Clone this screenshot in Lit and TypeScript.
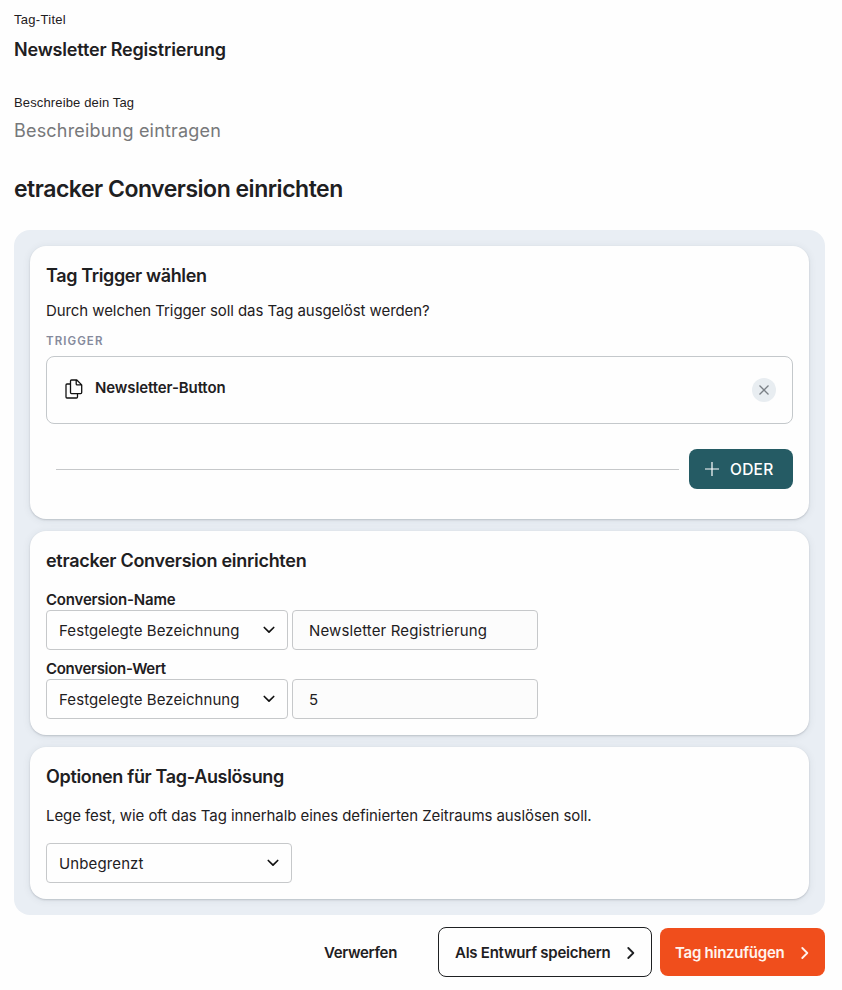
import { LitElement, html, css, svg } from "lit";
import { customElement } from "lit/decorators.js";

const chevronDown = html`<svg class="chev" width="12" height="8" viewBox="0 0 12 8" fill="none" stroke="currentColor" stroke-width="1.7" stroke-linecap="round" stroke-linejoin="round">${svg`<path d="M1.3 1.5 6 6.2 10.7 1.5"/>`}</svg>`;
const chevronRight = html`<svg width="8" height="12" viewBox="0 0 8 12" fill="none" stroke="currentColor" stroke-width="1.8" stroke-linecap="round" stroke-linejoin="round">${svg`<path d="M1.3 1 6.3 6 1.3 11"/>`}</svg>`;

@customElement("app-root")
export class AppRoot extends LitElement {
  static styles = css`
    :host {
      display: block;
      box-sizing: border-box;
      height: 990px;
      padding: 12px 17px 0 14px;
      background: #fefefe;
      color: #1e2022;
      font-family: Inter, "Liberation Sans", Arial, sans-serif;
      font-size: 15px;
      line-height: 20px;
      overflow: hidden;
      white-space: nowrap;
    }
    *, *::before { box-sizing: border-box; }
    h2, h3, p { margin: 0; }
    button { border: 0; padding: 0; margin: 0; background: none; color: inherit; white-space: nowrap; }
    svg { display: block; flex: none; }
    .caption { font-family: "Liberation Sans", Arial, sans-serif; font-size: 13px; line-height: 16px; letter-spacing: 0.29px; }
    .caption.desc { margin-top: 33px; letter-spacing: 0.14px; }
    .strong, h2, h3 { font-weight: 600; }
    h3, .title { font-size: 18px; line-height: 24px; letter-spacing: -0.28px; }
    .title { margin-top: 10px; letter-spacing: -0.18px; }
    .placeholder { margin-top: 8px; font-size: 18px; line-height: 24px; letter-spacing: 0.19px; color: #77787a; }
    h2 { margin-top: 30px; font-size: 23px; line-height: 32px; letter-spacing: -0.49px; }
    .panel { display: flex; flex-direction: column; gap: 12px; margin-top: 25px; padding: 16px; border-radius: 16px; background: #e9eef4; }
    .card { padding: 18px 16px 16px; border-radius: 16px; background: #fefefe; box-shadow: 0 1px 2px rgba(40, 50, 60, 0.2), 0 1px 8px rgba(40, 50, 60, 0.08); }
    .card.triggers { padding-bottom: 30px; }
    .triggers h3 { letter-spacing: -0.37px; }
    .options h3 { letter-spacing: -0.34px; }
    .question { margin-top: 13px; letter-spacing: -0.08px; }
    .overline { margin-top: 12px; font-weight: 600; font-size: 11.5px; line-height: 16px; letter-spacing: 1.07px; color: #858a9c; }
    .trigger { display: flex; align-items: center; height: 68px; margin-top: 7px; padding: 0 16px 0 18px; border: 1px solid #c4c8cb; border-radius: 8px; }
    .trigger .strong { flex: 1; margin-left: 12px; padding-bottom: 5px; letter-spacing: -0.1px; }
    .copy { margin-bottom: 2px; color: #111; }
    .remove { display: grid; place-items: center; width: 24px; height: 24px; border-radius: 50%; background: #e8edf1; color: #7a8086; }
    .or { display: flex; align-items: center; margin-top: 25px; padding-left: 10px; }
    .rule { flex: 1; height: 1px; margin-right: 10px; background: #c6c8ca; }
    .or-button { display: flex; align-items: center; gap: 11px; width: 104px; height: 40px; padding: 1px 0 0 16px; border-radius: 8px; background: #255b64; color: #fff; font: 500 15.5px/20px Inter, sans-serif; letter-spacing: 0.25px; }
    .or-button svg { margin-bottom: 1px; }
    .field-label { margin-top: 17px; letter-spacing: -0.19px; }
    .field-label.value { margin-top: 9px; letter-spacing: -0.3px; }
    .fields { display: flex; gap: 4px; }
    .select, .input { display: flex; align-items: center; height: 40px; border: 1px solid #c6c8ca; border-radius: 4px; padding-top: 1px; }
    .select { width: 242px; justify-content: space-between; padding-left: 12px; padding-right: 12px; letter-spacing: 0.07px; }
    .input { width: 246px; padding-left: 16px; background: #fcfcfc; letter-spacing: 0.13px; }
    .chev { margin-bottom: 1px; color: #111; }
    .hint { margin-top: 17px; letter-spacing: -0.07px; }
    .options .select { width: 246px; margin-top: 17px; letter-spacing: 0.12px; }
    .actions { display: flex; align-items: center; justify-content: flex-end; margin-top: 12px; }
    .actions button { display: flex; align-items: center; padding-top: 2px; font: 600 15px/20px Inter, sans-serif; letter-spacing: -0.25px; }
    .actions svg { margin-bottom: 1px; }
    .actions .discard { margin-right: 41px; letter-spacing: -0.33px; }
    .actions .draft { justify-content: space-between; width: 214px; height: 50px; padding: 2px 16px 0 16px; margin-right: 8px; border: 1px solid #1e2022; border-radius: 8px; }
    .actions .add { justify-content: space-between; width: 165px; height: 48px; padding: 2px 16px 0 15px; border-radius: 8px; background: #f04e1c; color: #fff4ee; }
  `;

  private field(label: string, value: string, extra = "") {
    return html`
      <div class="strong field-label ${extra}">${label}</div>
      <div class="fields">
        <div class="select"><span>Festgelegte Bezeichnung</span>${chevronDown}</div>
        <div class="input">${value}</div>
      </div>`;
  }

  render() {
    return html`
      <div class="caption">Tag-Titel</div>
      <div class="strong title">Newsletter Registrierung</div>
      <div class="caption desc">Beschreibe dein Tag</div>
      <div class="placeholder">Beschreibung eintragen</div>
      <h2>etracker Conversion einrichten</h2>
      <div class="panel">
        <section class="card triggers">
          <h3>Tag Trigger wählen</h3>
          <p class="question">Durch welchen Trigger soll das Tag ausgelöst werden?</p>
          <div class="overline">TRIGGER</div>
          <div class="trigger">
            <svg class="copy" width="18" height="20" viewBox="0 0 18 20" fill="none" stroke="currentColor" stroke-width="1.3" stroke-linejoin="round">
              <path d="M6.500 1h5.300l4.900 4.900v7.700q0 1-1 1H6.500q-1 0-1-1V2q0-1 1-1M11.200 1.200v3.700q0 1 1 1h4.200M5.500 5H2q-1 0-1 1v12q0 1 1 1h9.500q1 0 1-1v-3.200"/>
            </svg>
            <span class="strong">Newsletter-Button</span>
            <button class="remove" aria-label="Entfernen">
              <svg width="10" height="10" viewBox="0 0 10 10" stroke="currentColor" stroke-width="1.3"><path d="M.5.500 9.500 9.500M9.500.500.500 9.500"/></svg>
            </button>
          </div>
          <div class="or">
            <div class="rule"></div>
            <button class="or-button">
              <svg width="14" height="14" viewBox="0 0 14 14" stroke="currentColor" stroke-width="1.2"><path d="M7 0v14M0 7h14"/></svg>
              <span>ODER</span>
            </button>
          </div>
        </section>
        <section class="card">
          <h3>etracker Conversion einrichten</h3>
          ${this.field("Conversion-Name", "Newsletter Registrierung")}
          ${this.field("Conversion-Wert", "5", "value")}
        </section>
        <section class="card options">
          <h3>Optionen für Tag-Auslösung</h3>
          <p class="hint">Lege fest, wie oft das Tag innerhalb eines definierten Zeitraums auslösen soll.</p>
          <div class="select"><span>Unbegrenzt</span>${chevronDown}</div>
        </section>
      </div>
      <div class="actions">
        <button class="discard">Verwerfen</button>
        <button class="draft"><span>Als Entwurf speichern</span>${chevronRight}</button>
        <button class="add"><span>Tag hinzufügen</span>${chevronRight}</button>
      </div>`;
  }
}
